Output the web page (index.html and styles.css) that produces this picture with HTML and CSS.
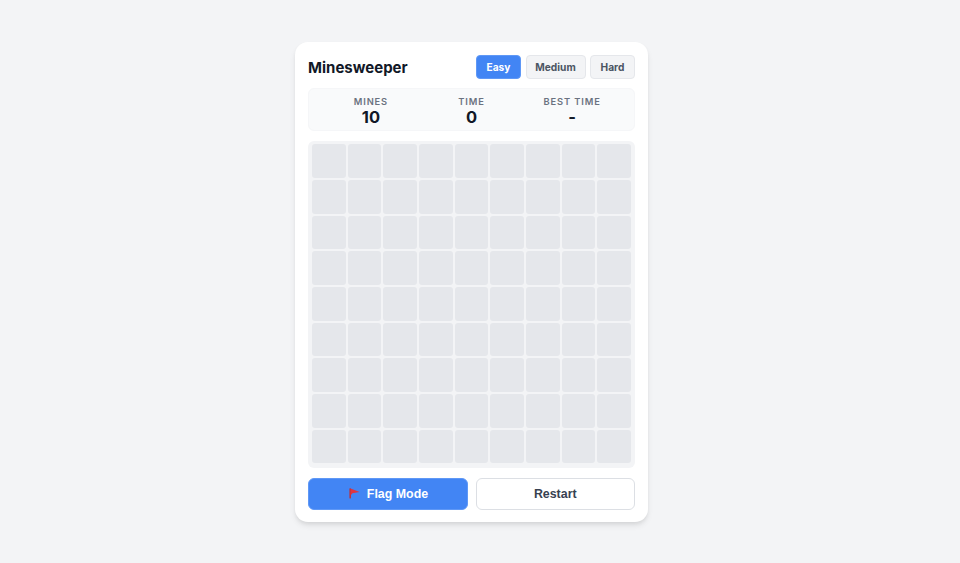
FILE: index.html
```html
<!DOCTYPE html>
<html lang="en">
<head>
  <meta charset="UTF-8">
  <meta name="viewport" content="width=device-width, initial-scale=1.0">
  <title>Minesweeper</title>
  <link rel="stylesheet" href="styles.css">
</head>
<body>

<div class="game">
  <header class="game-header">
    <h1>Minesweeper</h1>
    <div class="levels">
      <button class="level active">Easy</button>
      <button class="level">Medium</button>
      <button class="level">Hard</button>
    </div>
  </header>

  <section class="stats">
    <div class="stat">
      <div class="stat-label">MINES</div>
      <div class="stat-value">10</div>
    </div>
    <div class="stat">
      <div class="stat-label">TIME</div>
      <div class="stat-value">0</div>
    </div>
    <div class="stat">
      <div class="stat-label">BEST TIME</div>
      <div class="stat-value">-</div>
    </div>
  </section>

  <div class="board" id="board"></div>

  <div class="controls">
    <button class="control flag">
      <svg class="flag-icon" viewBox="0 0 11 11" width="11" height="11" aria-hidden="true">
        <rect x="0.4" y="0.4" width="1.6" height="10" fill="#b8323f"/>
        <path d="M1.6 0.4 L10.6 3.9 L3.4 5.2 L1.6 7.4 Z" fill="#e0343f"/>
      </svg>
      Flag Mode
    </button>
    <button class="control restart">Restart</button>
  </div>
</div>

<script>
  const board = document.getElementById('board');
  for (let i = 0; i < 81; i++) {
    const cell = document.createElement('div');
    cell.classList.add('cell');
    board.appendChild(cell);
  }
</script>

</body>
</html>
```

FILE: styles.css
```css
* {
  box-sizing: border-box;
}

body {
  font-family: Inter, 'Liberation Sans', sans-serif;
  margin: 0;
  height: 563px;
  padding: 1.6px 17px 0 0;
  background-color: #f3f4f6;
  color: #111827;
  display: flex;
  align-items: center;
  justify-content: center;
  overflow: hidden;
}

button {
  font-family: inherit;
  cursor: pointer;
}

.game {
  width: 353px;
  padding: 13px 13px 12.6px;
  background: #fff;
  border-radius: 13px;
  box-shadow: 0 4px 6px -1px rgba(0, 0, 0, 0.1), 0 2px 4px -1px rgba(0, 0, 0, 0.06);
}

.game-header {
  display: flex;
  justify-content: space-between;
  align-items: center;
  margin-bottom: 9px;
}

.game-header h1 {
  margin: 0;
  font-size: 15px;
  font-weight: 700;
  color: #111827;
}

.levels {
  display: flex;
  gap: 4.5px;
}

.level {
  width: 45px;
  height: 24px;
  padding: 0;
  font-size: 10.2px;
  font-weight: 700;
  color: #4b5563;
  background-color: #f3f4f6;
  border: 1px solid #e5e7eb;
  border-radius: 4px;
}

.level:nth-child(2) {
  width: 60px;
}

.level.active {
  color: #fff;
  background-color: #4285f4;
  border-color: #5f98f6;
}

.stats {
  display: grid;
  grid-template-columns: repeat(3, 1fr);
  height: 42.6px;
  padding: 7px 11.6px 0;
  margin-bottom: 10px;
  background-color: #f9fafb;
  border: 1px solid #f5f6f8;
  border-radius: 6px;
}

.stat {
  text-align: center;
}

.stat-label {
  font-size: 9.3px;
  line-height: 11px;
  font-weight: 600;
  letter-spacing: 0.9px;
  color: #6b7280;
}

.stat-value {
  font-size: 16.5px;
  line-height: 20px;
  font-weight: 700;
  color: #111827;
}

.board {
  display: grid;
  grid-template-columns: repeat(9, 1fr);
  gap: 2px;
  padding: 3.65px 4px 4.35px;
  margin-bottom: 10px;
  background-color: #f3f4f6;
  border-radius: 6px;
}

.cell {
  height: 33.67px;
  background-color: #e5e7eb;
  border-radius: 3px;
}

.controls {
  display: flex;
  justify-content: space-between;
}

.control {
  flex: 0 0 159.5px;
  height: 32px;
  font-family: 'Liberation Sans', sans-serif;
  font-size: 12.4px;
  font-weight: 700;
  border-radius: 6px;
}

.flag {
  padding-left: 8px;
  color: #fff;
  background-color: #4285f4;
  border: 1px solid #5f98f6;
}

.flag-icon {
  margin-right: 3px;
  vertical-align: -1.5px;
}

.restart {
  color: #374151;
  background-color: #fff;
  border: 1px solid #dcdfe4;
}
```
